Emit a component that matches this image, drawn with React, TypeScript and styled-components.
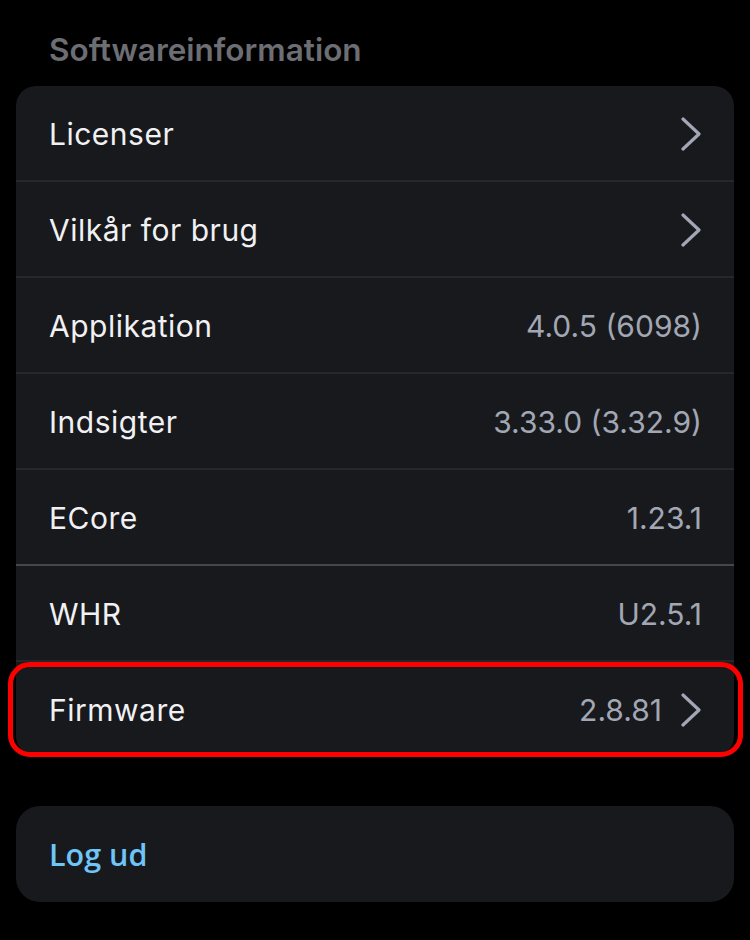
import React from "react";
import styled, { createGlobalStyle } from "styled-components";

const Global = createGlobalStyle`
  html, body { margin: 0; padding: 0; background: #000; }
  body { font-family: Inter, "Noto Sans", sans-serif; -webkit-font-smoothing: antialiased; }
`;

const Page = styled.div`
  width: 750px;
  min-height: 940px;
  background: #000;
  padding: 0 16px;
  box-sizing: border-box;
  display: flex;
  flex-direction: column;
`;

const SectionTitle = styled.h2`
  margin: 0 0 18px 0;
  padding: 31px 0 0 33px;
  font-size: 31.5px;
  line-height: 37px;
  font-weight: 600;
  color: #6c6e73;
`;

const Card = styled.div`
  background: #18191d;
  border-radius: 20px;
  display: flex;
  flex-direction: column;
`;

const Row = styled.div<{ $divider?: "dark" | "light" | "none" }>`
  position: relative;
  height: 92px;
  padding: 2px 32px 0 33px;
  display: flex;
  align-items: center;
  border-bottom: ${(p) =>
    p.$divider === "none" ? "none" : `2px solid ${p.$divider === "light" ? "#46474b" : "#26272b"}`};
`;

const Label = styled.span`
  flex: 1;
  font-size: 30px;
  color: #f1f1f3;
  letter-spacing: 0.5px;
`;

const Value = styled.span`
  font-size: 30px;
  color: #a2a7b4;
`;

const ChevronBox = styled.span<{ $withValue?: boolean }>`
  display: flex;
  margin-left: ${(p) => (p.$withValue ? "18px" : "0")};
`;

const Highlight = styled.div`
  position: absolute;
  top: 0;
  bottom: -1px;
  left: -8px;
  right: -9px;
  border: 5px solid #ff0000;
  border-radius: 22px;
  pointer-events: none;
`;

const Chevron = () => (
  <svg width="22" height="34" viewBox="0 0 22 34" fill="none">
    <path d="M3 2 L19 17 L3 32" stroke="#a2a7b4" strokeWidth="3.2" strokeLinecap="round" strokeLinejoin="round" />
  </svg>
);

const LogoutCard = styled.div`
  margin-top: 50px;
  background: #18191d;
  border-radius: 24px;
  height: 96px;
  padding: 0 33px;
  display: flex;
  align-items: center;
`;

const LogoutText = styled.span`
  font-family: "Open Sans", "Noto Sans", sans-serif;
  font-size: 30.5px;
  font-weight: 600;
  color: #6ec5f8;
`;

type Item = { label: string; value?: string; chevron?: boolean };

const items: Item[] = [
  { label: "Licenser", chevron: true },
  { label: "Vilkår for brug", chevron: true },
  { label: "Applikation", value: "4.0.5 (6098)" },
  { label: "Indsigter", value: "3.33.0 (3.32.9)" },
  { label: "ECore", value: "1.23.1" },
  { label: "WHR", value: "U2.5.1" },
  { label: "Firmware", value: "2.8.81", chevron: true },
];

export default function App() {
  return (
    <>
      <Global />
      <Page>
        <SectionTitle>Softwareinformation</SectionTitle>
        <Card>
          {items.map((it, i) => {
            const last = i === items.length - 1;
            const divider = last ? "none" : i === 4 ? "light" : "dark";
            return (
              <Row key={it.label} $divider={divider}>
                <Label>{it.label}</Label>
                {it.value && <Value>{it.value}</Value>}
                {it.chevron && (
                  <ChevronBox $withValue={!!it.value}>
                    <Chevron />
                  </ChevronBox>
                )}
                {last && <Highlight />}
              </Row>
            );
          })}
        </Card>
        <LogoutCard>
          <LogoutText>Log ud</LogoutText>
        </LogoutCard>
      </Page>
    </>
  );
}
